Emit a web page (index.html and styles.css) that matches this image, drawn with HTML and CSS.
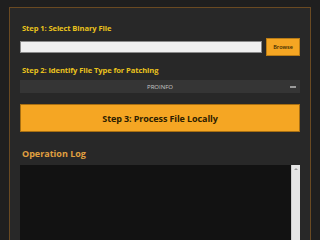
FILE: index.html
```html
<!DOCTYPE html>
<html>
<head>
<meta charset="utf-8">
<link rel="stylesheet" href="styles.css">
</head>
<body>
<div class="panel">
  <h2 class="step">Step 1: Select Binary File</h2>
  <div class="file-row">
    <div class="file-input"></div>
    <button class="browse">Browse</button>
  </div>
  <h2 class="step step2">Step 2: Identify File Type for Patching</h2>
  <div class="select">
    <span class="select-text">PROINFO</span>
    <span class="select-dash"></span>
  </div>
  <button class="process">Step 3: Process File Locally</button>
  <h3 class="log-title">Operation Log</h3>
  <div class="log">
    <div class="log-body"></div>
    <div class="scrollbar"><span class="arrow"></span></div>
  </div>
</div>
</body>
</html>
```
FILE: styles.css
```css
html, body {
  margin: 0;
  padding: 0;
  height: 100%;
  background: #1f1f1f;
  font-family: "Open Sans", "Noto Sans", sans-serif;
  overflow: hidden;
}
body {
  display: flex;
  flex-direction: column;
}
.panel {
  flex: 1;
  min-height: 0;
  margin: 7px 9px 0 9px;
  border: 1px solid #6a4a22;
  border-bottom: 0;
  background: #282828;
  padding: 14px 10px 0 10px;
  display: flex;
  flex-direction: column;
}
.step {
  margin: 0;
  font-size: 7.6px;
  line-height: 12px;
  font-weight: 700;
  color: #e9c21d;
  padding-left: 2px;
  letter-spacing: -0.1px;
}
.file-row {
  margin-top: 4px;
  display: flex;
  align-items: center;
  height: 18px;
  gap: 4px;
}
.file-input {
  flex: 1;
  height: 12px;
  box-sizing: border-box;
  background: #f0f0f0;
  border: 1px solid #8a8a8a;
}
.browse {
  width: 34px;
  height: 18px;
  padding: 0;
  margin: 0;
  background: #f5a623;
  border: 1px solid #b97c16;
  font-family: inherit;
  font-size: 5.5px;
  font-weight: 600;
  color: #3a2800;
}
.step2 {
  margin-top: 8px;
}
.select {
  margin-top: 4px;
  height: 13px;
  flex: none;
  background: #353535;
  display: flex;
  align-items: center;
  justify-content: center;
  position: relative;
}
.select-text {
  font-size: 6px;
  color: #c8c8c8;
}
.select-dash {
  position: absolute;
  right: 4px;
  top: 6px;
  width: 6px;
  height: 1.5px;
  background: #9a9a9a;
}
.process {
  display: block;
  flex: none;
  width: 100%;
  margin: 11px 0 0 0;
  height: 28px;
  padding: 0;
  background: #f5a623;
  border: 1px solid #a86f12;
  font-family: inherit;
  font-size: 9px;
  font-weight: 700;
  color: #2d2000;
  letter-spacing: -0.1px;
}
.log-title {
  margin: 15px 0 0 0;
  padding-left: 2px;
  font-size: 9px;
  line-height: 14px;
  font-weight: 700;
  color: #e0a040;
}
.log {
  margin-top: 4px;
  flex: 1;
  min-height: 0;
  display: flex;
  background: #121212;
}
.log-body {
  flex: 1;
}
.scrollbar {
  width: 8px;
  background: #e6e6e6;
  border-left: 1px solid #cfcfcf;
  display: flex;
  justify-content: center;
}
.arrow {
  margin-top: 3px;
  width: 0;
  height: 0;
  border-left: 2px solid transparent;
  border-right: 2px solid transparent;
  border-bottom: 2px solid #9a9a9a;
}
```
